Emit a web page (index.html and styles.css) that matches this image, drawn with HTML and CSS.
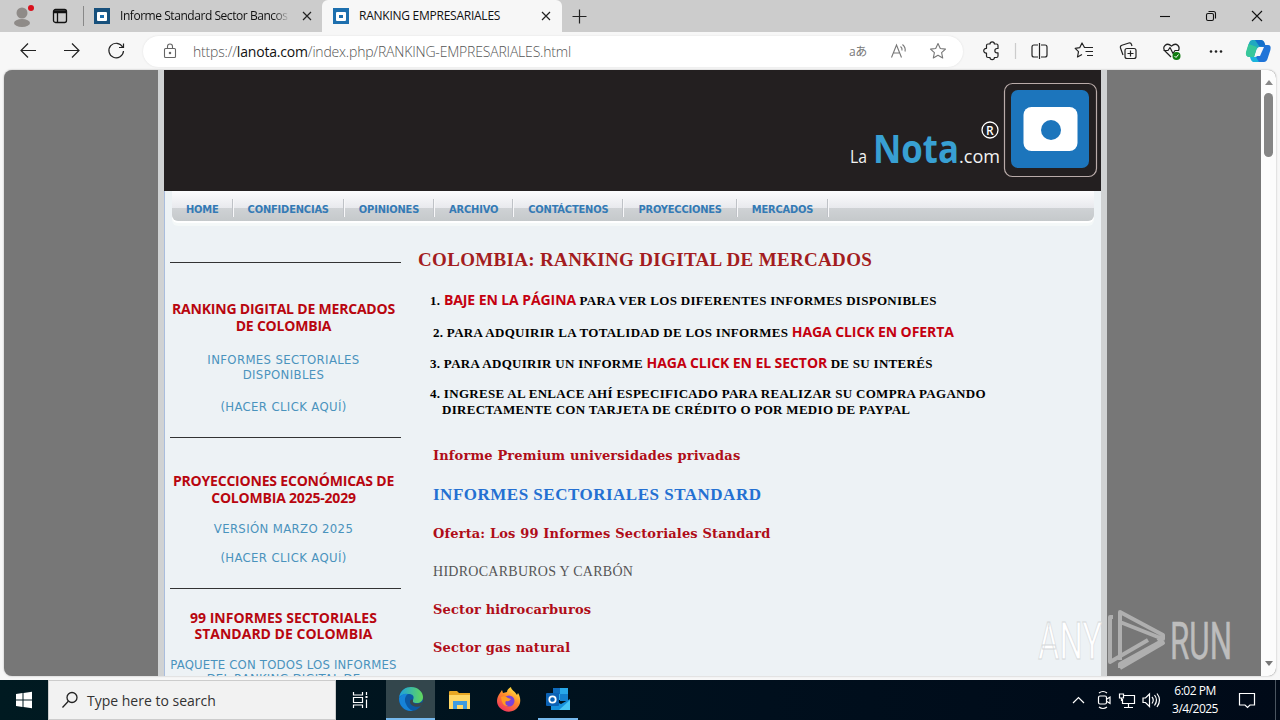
FILE: index.html
```html
<!DOCTYPE html>
<html lang="es">
<head>
  <meta charset="utf-8">
  <title>RANKING EMPRESARIALES</title>
  <link rel="stylesheet" href="styles.css">
</head>
<body>
  <div class="tabstrip">
    <svg class="profile" width="30" height="32" viewBox="0 0 30 32">
      <circle cx="11" cy="13" r="5.5" fill="#8f8b88"/>
      <ellipse cx="11" cy="23" rx="8" ry="4" fill="#8f8b88"/>
      <circle cx="20" cy="8" r="3" fill="#d9101c"/>
    </svg>
    <svg class="workspace" width="16" height="16" viewBox="0 0 16 16" fill="none" stroke="#111" stroke-width="1.3">
      <rect x="1.5" y="1.5" width="13" height="13" rx="2"/>
      <path d="M2 4.5h12M5.5 4.5V14M2 3h12"/>
    </svg>
    <span class="sep"></span>
    <div class="tab tab1">
      <span class="favicon"><i></i></span>
      <span class="title fade">Informe Standard Sector Bancos</span>
      <svg width="10" height="10" viewBox="0 0 10 10" stroke="#222" stroke-width="1.2"><path d="M1 1l8 8M9 1L1 9"/></svg>
    </div>
    <div class="tab tab2">
      <span class="favicon"><i></i></span>
      <span class="title">RANKING EMPRESARIALES</span>
      <svg width="10" height="10" viewBox="0 0 10 10" stroke="#222" stroke-width="1.2"><path d="M1 1l8 8M9 1L1 9"/></svg>
    </div>
    <svg class="plus" width="15" height="15" viewBox="0 0 15 15" stroke="#222" stroke-width="1.2"><path d="M7.5 0.5v14M0.5 7.5h14"/></svg>
    <svg class="winbtns" width="110" height="32" viewBox="0 0 110 32" fill="none" stroke="#111" stroke-width="1.1">
      <path d="M1 16.5h10"/>
      <rect x="47.5" y="13.5" width="7" height="7" rx="1.5"/>
      <path d="M49.5 11.5h5a2 2 0 0 1 2 2v5"/>
      <path d="M93 11l10 10M103 11l-10 10"/>
    </svg>
  </div>

  <div class="toolbar">
    <svg class="navicons" width="108" height="20" viewBox="0 0 108 20" fill="none" stroke="#222" stroke-width="1.2">
      <path d="M16 9.500H1M8 2.500L1 9.500l7 7"/>
      <path d="M44 9.500h15M52 2.500l7 7l-7 7"/>
      <path d="M102.600 6A7.300 7.300 0 1 0 103.500 10M103.500 2.500V6.500H99"/>
    </svg>
    <div class="address">
      <svg width="14" height="16" viewBox="0 0 14 16" fill="none" stroke="#666" stroke-width="1.1">
        <rect x="1.500" y="5.500" width="11" height="9" rx="1"/><path d="M4.500 5.500V3.500a2.500 2.500 0 0 1 5 0v2"/><circle cx="7" cy="10" r=".7" fill="#666"/>
      </svg>
      <span class="url">https://<b>lanota.com</b>/index.php/RANKING-EMPRESARIALES.html</span>
      <span class="lang">aあ</span>
      <svg class="read" width="18" height="18" viewBox="0 0 18 18" fill="none" stroke="#777" stroke-width="1.1">
        <path d="M1.500 15.500L6.500 3l5 12.500M3.300 11h6.500M10.500 4.500q2 1.500 1.500 4M12.500 2.500q3.500 3 2.500 7"/>
      </svg>
      <svg class="star" width="18" height="18" viewBox="0 0 18 18" fill="none" stroke="#777" stroke-width="1.1" stroke-linejoin="round">
        <path d="M9 1.500l2.300 5 5.200.6-3.900 3.600 1.100 5.300L9 13.300 4.300 16l1.100-5.300L1.500 7.100l5.200-.6z"/>
      </svg>
    </div>
    <svg class="tools" width="300" height="30" viewBox="0 0 300 30" fill="none" stroke="#222" stroke-width="1.2" stroke-linejoin="round">
      <path d="M6.500 9.500q0-1.500 1.500-1.500h2a2.200 2.200 0 0 1 4.400 0h2.100q1.500 0 1.500 1.500v3h-1a2.100 2.100 0 0 0 0 4.300h1v3.200q0 1.500-1.500 1.500h-2.100a2.200 2.200 0 0 1-4.400 0H8q-1.500 0-1.500-1.500v-3a2.300 2.300 0 1 1 0-4.500z"/>
      <path d="M35.500 7v16" stroke="#ccc"/>
      <path d="M58 9h-4a2 2 0 0 0-2 2v8a2 2 0 0 0 2 2h4M61 9h4a2 2 0 0 1 2 2v8a2 2 0 0 1-2 2h-4M59.500 7v16"/>
      <path d="M107 11.500h-2.500L102 7l-2.300 4.700-4.500.6 3.300 3.300-1 5.400 4.500-2.500M105.500 11.500h7.500M105.500 15.500h7.500M107 19.500h6"/>
      <rect x="145" y="12.500" width="11" height="10" rx="2"/>
      <path d="M150.500 14.500v6M147.500 17.500h6M143 19l-2.500-7q-.6-2 1.400-2.700l7-2.300q2-.5 2.600 1.500l.5 1.500"/>
      <path d="M191 21l-6-6q-2.500-3 0-5.500q3-2.800 6.500.7q3.500-3.500 6.500-.7q2 2.200.5 5.200M183.500 14.500h4.500l2-3 3 6 2-3h4" />
      <circle cx="196.500" cy="20" r="4" fill="#107c10" stroke="none"/>
      <path d="M194.500 20l1.500 1.500 2.500-3" stroke="#fff" stroke-width="1"/>
      <g fill="#222" stroke="none"><circle cx="231" cy="15.500" r="1.300"/><circle cx="236" cy="15.500" r="1.300"/><circle cx="241" cy="15.500" r="1.300"/></g>
      <g stroke="none">
        <path d="M272 4h8q3 0 4 3l1 4h-5q-3 0-4 4l-2 6h-4q-5 0-3.500-5l2.500-9q1-3 3-3z" fill="#20a9c0"/>
        <path d="M270 4h11q3 0 4 4l.5 2.500h-6L275 4z" fill="#126fca"/>
        <path d="M268.500 8l-2.500 8q-1 5 4 5h4l3-10z" fill="#37c79a"/>
        <path d="M285 9h3q3.500 0 2.400 5l-2.600 8q-1 4-4 4h-9q-3 0-4-5h4q3 0 4-4l2-5q1-3 4.200-3z" fill="#1f74d8"/>
        <path d="M270 21h6l3 5h-5q-3 0-4-5z" fill="#1bb5dc"/>
        <path d="M279 11h5l-4 9h-5z" fill="#f7f7f7"/>
      </g>
    </svg>
  </div>

  <div class="viewport">
    <div class="page">
      <div class="header">
        <svg width="256" height="121" viewBox="0 0 256 121">
          <rect x="159.500" y="13.500" width="92" height="93" rx="8" fill="none" stroke="#b9aba9" stroke-width="1.200"/>
          <rect x="166" y="20" width="78" height="78" rx="7" fill="#1c75bc"/>
          <rect x="178.500" y="37" width="54" height="44" rx="8" fill="#fff"/>
          <circle cx="206" cy="60" r="10" fill="#1c75bc"/>
          <text x="5" y="93" class="logo" font-size="18" textLength="17" lengthAdjust="spacingAndGlyphs" fill="#f2f2f2">La</text>
          <text x="28" y="93" class="logo" font-size="39" font-weight="700" textLength="86" lengthAdjust="spacingAndGlyphs" fill="#38a0d3">Nota</text>
          <text x="114" y="93" class="logo" font-size="19" textLength="41" lengthAdjust="spacingAndGlyphs" fill="#f2f2f2">.com</text>
          <circle cx="145" cy="60" r="8" fill="none" stroke="#fff" stroke-width="1.300"/>
          <text x="141" y="64.500" class="logo" font-size="12" font-weight="600" fill="#fff">R</text>
        </svg>
      </div>
      <div class="menu">
        <a>HOME</a><a>CONFIDENCIAS</a><a>OPINIONES</a><a>ARCHIVO</a><a>CONTÁCTENOS</a><a>PROYECCIONES</a><a>MERCADOS</a>
      </div>
      <div class="columns">
        <div class="sidebar">
          <div class="block block1">
            <h3>RANKING DIGITAL DE MERCADOS<br>DE COLOMBIA</h3>
            <p>INFORMES SECTORIALES<br>DISPONIBLES</p>
            <p>(HACER CLICK AQUÍ)</p>
          </div>
          <div class="block block2">
            <h3>PROYECCIONES ECONÓMICAS DE<br>COLOMBIA 2025-2029</h3>
            <p>VERSIÓN MARZO 2025</p>
            <p>(HACER CLICK AQUÍ)</p>
          </div>
          <div class="block block3">
            <h3>99 INFORMES SECTORIALES<br>STANDARD DE COLOMBIA</h3>
            <p>PAQUETE CON TODOS LOS INFORMES<br>DEL RANKING DIGITAL DE</p>
          </div>
        </div>
        <div class="main">
          <h1>COLOMBIA: RANKING DIGITAL DE MERCADOS</h1>
          <p class="step">1. <em>BAJE EN LA PÁGINA</em> PARA VER LOS DIFERENTES INFORMES DISPONIBLES</p>
          <p class="step step2">2. PARA ADQUIRIR LA TOTALIDAD DE LOS INFORMES <em>HAGA CLICK EN OFERTA</em></p>
          <p class="step step3">3. PARA ADQUIRIR UN INFORME <em>HAGA CLICK EN EL SECTOR</em> DE SU INTERÉS</p>
          <p class="step step4">4. INGRESE AL ENLACE AHÍ ESPECIFICADO PARA REALIZAR SU COMPRA PAGANDO<br><span>DIRECTAMENTE CON TARJETA DE CRÉDITO O POR MEDIO DE PAYPAL</span></p>
          <div class="reports">
            <a>Informe Premium universidades privadas</a>
            <h2>INFORMES SECTORIALES STANDARD</h2>
            <a>Oferta: Los 99 Informes Sectoriales Standard</a>
            <h4>HIDROCARBUROS Y CARBÓN</h4>
            <a>Sector hidrocarburos</a>
            <a>Sector gas natural</a>
          </div>
        </div>
      </div>
    </div>
    <div class="scrollbar"><i class="up"></i><i class="thumb"></i><i class="down"></i></div>
  </div>

  <svg class="watermark" width="200" height="70" viewBox="0 0 200 70">
    <text x="2" y="53" font-size="51" textLength="64" lengthAdjust="spacingAndGlyphs" class="any">ANY</text>
    <g fill="none" stroke="#bdbdbd" stroke-opacity=".8" stroke-width="4" stroke-linejoin="round">
      <path d="M77 11h-3v45l38-22M84 54V6l43 23v4L84 16M84 62l43-25-5-5M84 62v-4l40-22"/>
    </g>
    <text x="134" y="53" font-size="51" textLength="62" lengthAdjust="spacingAndGlyphs" class="run">RUN</text>
  </svg>

  <div class="taskbar">
    <svg class="start" width="48" height="40" viewBox="0 0 48 40" fill="#fff"><path d="M16 14l6.500-1v6.500H16zM23.500 12.900L32 11.700v7.800h-8.500zM16 20.500h6.500V27L16 26zM23.500 20.500H32v7.800l-8.500-1.200z"/></svg>
    <div class="search">
      <svg width="18" height="18" viewBox="0 0 18 18" fill="none" stroke="#222" stroke-width="1.300"><circle cx="11" cy="6.500" r="5"/><path d="M7.300 10.300L1.500 16.500"/></svg>
      <span>Type here to search</span>
    </div>
    <div class="app"><svg width="18" height="18" viewBox="0 0 18 18" fill="none" stroke="#fff" stroke-width="1.200"><path d="M1.500 1v3h9V1M1.500 17v-3h9v3M1.500 6.500h9v5h-9zM14.500 1v3M14.500 8.500V17"/><path d="M13.500 6h2" stroke-width="2"/></svg></div>
    <div class="app open edge">
      <svg width="26" height="26" viewBox="0 0 26 26">
        <defs><linearGradient id="eg" x1="0" x2="1"><stop offset="0" stop-color="#1c9fe0"/><stop offset="1" stop-color="#62d85b"/></linearGradient></defs>
        <circle cx="13" cy="13" r="12" fill="#0c59a4"/>
        <path d="M1 12C2 4 8 1 13 1c7 0 12 5 12 10 0 4-3 6-6 6-4 0-5-1-4-3 2-4-1-6-4-6-5 0-9 1-10 4z" fill="url(#eg)"/>
        <path d="M1 12c2-4 6-5 9-4-3 2-4 6-2 10 1 3 4 6 7 7C7 26 1 20 1 12z" fill="#1683d8"/>
        <path d="M15 14c-1 3 2 5 7 3l3-1-2 4c-4 2-11 0-11-4 0-2 1-3 3-2z" fill="#39464c"/>
      </svg>
    </div>
    <div class="app">
      <svg width="24" height="22" viewBox="0 0 24 22"><path d="M1 3q0-1 1-1h7l2 2h11v16H1z" fill="#e8a723"/><path d="M1 6h21v14H1z" fill="#ffd766"/><path d="M5 12h14v8h-4v-4H9v4H5z" fill="#3e9be0"/></svg>
    </div>
    <div class="app">
      <svg width="26" height="26" viewBox="0 0 26 26">
        <defs><linearGradient id="fg" x1=".8" y1="0" x2=".2" y2="1"><stop offset="0" stop-color="#fff044"/><stop offset=".45" stop-color="#ff8a2a"/><stop offset="1" stop-color="#f02c62"/></linearGradient></defs>
        <path d="M4 6l2-3 1 3 4-1c0-2 2-4 4-5 0 3 4 4 6 8l1-2c3 5 3 10 0 14-4 6-13 6-18 1-4-4-4-10 0-15z" fill="url(#fg)"/>
        <circle cx="13" cy="14" r="5.500" fill="#7a42d8"/><path d="M5 10q4-2 7 1l3 1q-2 3-5 2-2 3 2 5-6 1-7-9z" fill="#ff9b22"/>
      </svg>
    </div>
    <div class="app open outlook">
      <svg width="26" height="24" viewBox="0 0 26 24"><path d="M8 1h15v12H8z" fill="#28a8ea"/><path d="M8 1h7v6H8z" fill="#0f6cbd"/><path d="M15 7h8v7h-8z" fill="#1380cf"/><path d="M6 12l10 5 9-5v11H6z" fill="#1690dc"/><path d="M14 23l11-10v10z" fill="#48c6f5"/><rect x="1" y="6" width="13" height="13" rx="1" fill="#0b62b5"/><circle cx="7.500" cy="12.500" r="3.200" fill="none" stroke="#fff" stroke-width="1.800"/></svg>
    </div>
    <svg class="tray" width="96" height="40" viewBox="0 0 96 40" fill="none" stroke="#fff" stroke-width="1.200">
      <path d="M3 23l5.500-5.500L14 23"/>
      <rect x="28.500" y="16" width="8" height="8" rx="1.500"/><path d="M37 19l3-2v6.500l-3-2M29 13q4-3 8 0M29 27q4 3 8 0"/>
      <path d="M54 15.500h10.500v8H52.500V19M58.500 24v3M54 27.500h9M49.500 14h4v4h-4zM51.500 18v3"/>
      <path d="M73 18h2.500l4-4v12.500l-4-4H73zM82 17q2.500 3 0 6.500M84.500 15q4 5 0 10.500M87 13.500q5 6.500 0 13.500"/>
    </svg>
    <div class="clock">6:02 PM<br>3/4/2025</div>
    <svg class="notice" width="18" height="18" viewBox="0 0 18 18" fill="none" stroke="#fff" stroke-width="1.200"><path d="M1.500 2.500h15v11.500H12l-2.500 2.500L7 14H1.500z"/></svg>
    <span class="desk"></span>
  </div>
</body>
</html>
```
FILE: styles.css
```css
* {
  box-sizing: border-box;
}

body {
  margin: 0;
  width: 1280px;
  height: 720px;
  overflow: hidden;
  background: #f7f7f7;
  font-family: "Open Sans", "Noto Sans", "Noto Sans CJK JP", sans-serif;
}

svg {
  display: block;
  flex: none;
}

h1, h2, h3, h4, p {
  margin: 0;
}

/* browser */
.tabstrip {
  display: flex;
  align-items: center;
  height: 32px;
  background: #ccc;
}

.profile {
  margin-left: 11px;
}

.workspace {
  margin-left: 11px;
}

.sep {
  width: 1px;
  height: 20px;
  margin-left: 15px;
  background: #888;
}

.tab {
  display: flex;
  align-items: center;
  height: 32px;
  font-size: 12px;
  color: #111;
  white-space: nowrap;
}

.tab1 {
  width: 238px;
  padding-left: 10px;
}

.tab2 {
  width: 240px;
  padding-left: 11px;
  background: #f7f7f7;
  border-radius: 6px 6px 0 0;
}

.favicon {
  display: flex;
  align-items: center;
  justify-content: center;
  flex: none;
  width: 16px;
  height: 16px;
  background: #1d6fae;
}

.favicon i {
  width: 10px;
  height: 9px;
  border: 3px solid #fff;
  border-radius: 1px;
  background: #1d6fae;
}

.tab1 .favicon {
  background: #17507c;
}

.title {
  flex: none;
  width: 170px;
  margin: 0 12px 2px 10px;
  overflow: hidden;
  letter-spacing: -0.45px;
}

.tab2 .title {
  letter-spacing: -0.25px;
}

.fade {
  -webkit-mask-image: linear-gradient(90deg, #000 90%, transparent);
  mask-image: linear-gradient(90deg, #000 90%, transparent);
}

.plus {
  margin-left: 10px;
}

.winbtns {
  margin-left: auto;
  margin-right: 11px;
}

.toolbar {
  display: flex;
  align-items: center;
  height: 38px;
}

.navicons {
  margin-left: 20px;
}

.address {
  display: flex;
  align-items: center;
  width: 820px;
  height: 31px;
  margin-left: 15px;
  padding-left: 20px;
  border-radius: 16px;
  background: #fff;
  box-shadow: 0 0 2px #ddd;
}

.url {
  width: 656px;
  margin-left: 16px;
  font-size: 14px;
  font-weight: 300;
  letter-spacing: -0.19px;
  color: #555;
  white-space: nowrap;
}

.url b {
  font-weight: 400;
  color: #111;
}

.lang {
  width: 18px;
  font-size: 12px;
  letter-spacing: -0.5px;
  color: #777;
  white-space: nowrap;
}

.read {
  margin-left: 23px;
}

.star {
  margin-left: 21px;
}

.tools {
  margin-left: 17px;
}

/* site */
.viewport {
  display: flex;
  width: 1272px;
  height: 606px;
  margin-left: 4px;
  overflow: hidden;
  border-radius: 8px;
  background: #777;
  box-shadow: 0 0 2px #aaa;
}

.page {
  width: 949px;
  height: 606px;
  margin-left: 154px;
  overflow: hidden;
  border: solid #d0d2d3;
  border-width: 0 6px;
  background: #edf2f5;
  box-shadow: inset 1px 0 #a9bddd;
}

.header {
  display: flex;
  justify-content: flex-end;
  height: 121px;
  background: #231f20;
}

.logo {
  font-family: "Open Sans", sans-serif;
}

.menu {
  display: flex;
  width: 922px;
  height: 30px;
  margin: 0 0 0 8px;
  padding-top: 8px;
  border-radius: 0 0 6px 6px;
  background: linear-gradient(#fcfcfe 0, #e8e9ed 17px, #cfd2d5 17px, #c5c9cb 100%);
  box-shadow: 0 2px #fff, 0 5px #f4f8f8;
}

.menu a {
  height: 18px;
  padding: 0 14px 0 15px;
  border-right: 1px solid #bfc2c7;
  box-shadow: 1px 0 #f7f7f9;
  font: bold 11px/21px "DejaVu Sans Condensed", "DejaVu Sans", sans-serif;
  letter-spacing: -0.18px;
  color: #347ab5;
}

.menu a:first-child {
  padding: 0 13px 0 14px;
}

.columns {
  display: flex;
  margin-top: 7px;
}

.sidebar {
  width: 231px;
  margin: 34px 0 0 6px;
  text-align: center;
  white-space: nowrap;
}

.block {
  border-top: 1px solid #333;
}

.block1 {
  height: 175px;
  padding-top: 37px;
}

.block2 {
  height: 151px;
  padding-top: 34px;
}

.block3 {
  padding-top: 21px;
}

.sidebar h3 {
  margin: 0 4px 0 0;
  font: bold 14px/17px "Open Sans", sans-serif;
  letter-spacing: -0.2px;
  color: #b8060f;
}

.sidebar .block3 h3 {
  line-height: 16px;
  letter-spacing: 0;
}

.sidebar p {
  margin-right: 4px;
  font: 13px/15px "DejaVu Sans Condensed", "DejaVu Sans", sans-serif;
  letter-spacing: 0.36px;
  color: #4a93bd;
}

.block1 p {
  margin-top: 18px;
}

.block1 p + p {
  margin-top: 17px;
}

.block2 p {
  margin-top: 15px;
}

.block2 p + p {
  margin-top: 14px;
}

.sidebar .block3 p {
  margin-top: 16px;
  line-height: 14px;
  letter-spacing: 0.2px;
}

.main {
  padding: 20px 0 0 17px;
  white-space: nowrap;
}

.main h1 {
  font: bold 19px/24px "Liberation Serif", serif;
  letter-spacing: 0.33px;
  color: #a31c20;
}

.step {
  height: 16px;
  margin: 20px 0 0 12px;
  font: bold 13px/16px "Liberation Serif", serif;
  letter-spacing: 0.29px;
  color: #000;
}

.step em {
  font: bold 14px/16px "Open Sans", sans-serif;
  letter-spacing: -0.08px;
  color: #c4000f;
}

.main .step2 {
  margin: 16px 0 0 15px;
}

.main .step3 {
  margin-top: 15px;
}

.main .step4 {
  height: 32px;
  margin-top: 15px;
}

.step4 span {
  margin-left: 12px;
}

.reports {
  display: flex;
  flex-direction: column;
  gap: 18px;
  padding: 28px 0 0 15px;
}

.reports a {
  font: bold 13px/20px "DejaVu Serif", serif;
  letter-spacing: 0.15px;
  color: #b00d18;
}

.reports h2 {
  font: bold 17px/22px "Liberation Serif", serif;
  letter-spacing: 0.5px;
  color: #2470d2;
}

.reports h4 {
  font: 14px/20px "Liberation Serif", serif;
  letter-spacing: 0.27px;
  color: #555;
}

.scrollbar {
  display: flex;
  flex-direction: column;
  align-items: center;
  width: 15px;
  margin-left: auto;
  background: #fcfcfc;
}

.up {
  margin-top: 10px;
  border: 4px solid transparent;
  border-top: 0;
  border-bottom: 5px solid #888;
}

.thumb {
  width: 9px;
  height: 64px;
  margin-top: 8px;
  border-radius: 5px;
  background: #858585;
}

.down {
  margin: auto 0 10px;
  border: 4px solid transparent;
  border-bottom: 0;
  border-top: 5px solid #777;
}

.watermark {
  position: absolute;
  left: 1036px;
  top: 606px;
}

.watermark text {
  font-family: Roboto, sans-serif;
  font-weight: 400;
}

.any {
  fill: #fff;
  stroke: #d5d8da;
  stroke-width: 0.8px;
}

.run {
  fill: #bdbdbd;
  stroke: #bdbdbd;
  stroke-width: 0.5px;
}

/* taskbar */
.taskbar {
  display: flex;
  align-items: center;
  height: 40px;
  margin-top: 4px;
  background: linear-gradient(90deg, #001a21, #000f1d 60%, #000a18);
}

.search {
  display: flex;
  align-items: center;
  gap: 8px;
  width: 288px;
  height: 40px;
  padding-left: 12px;
  border: 1px solid #ccc;
  background: #f2f2f2;
  font-size: 14px;
  color: #333;
}

.app {
  display: flex;
  align-items: center;
  justify-content: center;
  width: 49px;
  height: 40px;
}

.search + .app {
  width: 50px;
}

.open {
  border-bottom: 2px solid #76b9ed;
}

.edge {
  background: #33464c;
}

.outlook {
  width: 40px;
  margin-left: 5px;
}

.tray {
  margin-left: auto;
}

.clock {
  width: 54px;
  margin-left: 2px;
  text-align: center;
  font-size: 12px;
  line-height: 18px;
  letter-spacing: -0.5px;
  color: #fff;
}

.notice {
  margin-left: 16px;
}

.desk {
  width: 1px;
  height: 40px;
  margin: 0 4px 0 19px;
  background: #4a5560;
}
```
